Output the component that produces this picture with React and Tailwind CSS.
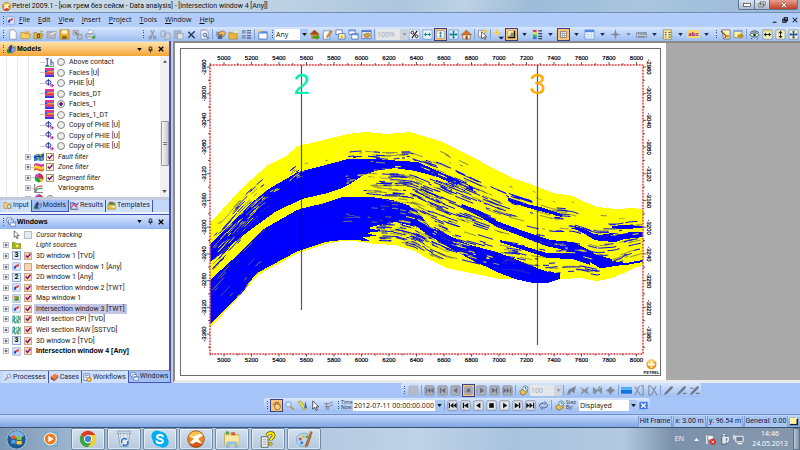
import React from 'react';

/* ---------- icon set (12 x 12 grid) ---------- */
const ART = {
  page: <path d="M3 1h4.5L10 3.5V11H3z" fill="#fff" stroke="#8793ad" strokeWidth=".8" />,
  open: <g><path d="M1 4h4l1-1.5h4V5H1z" fill="#e8a92a" /><path d="M1 10.5V4h3l1 1h4v1h3l-2.5 4.5z" fill="#f8cf5c" stroke="#b77c16" strokeWidth=".6" /></g>,
  openGear: <g><path d="M1 10.5V4h3l1 1h5l1 1-2 4.5z" fill="#f3bd3c" stroke="#9a6a18" strokeWidth=".7" /><circle cx="6" cy="7.5" r="2.2" fill="#5b4a1c" /><circle cx="6" cy="7.5" r=".9" fill="#f8cf5c" /><path d="M8 1.5l3 1-2 1.5z" fill="#d08a10" /></g>,
  archive: <g><path d="M1 3h9v7H1z" fill="#b9bcc2" stroke="#8a8d93" strokeWidth=".7" /><path d="M4 5l7-3v3l-7 3z" fill="#e5e6e9" stroke="#8d9096" strokeWidth=".6" /></g>,
  save: <g><path d="M1 1h10v10H1z" fill="#eeb02d" stroke="#a9751a" strokeWidth=".7" /><path d="M3 1.5h6V5H3z" fill="#fff8dd" /><path d="M3.5 7.5h5V11h-5z" fill="#8b6a24" /></g>,
  tools: <g><path d="M1 1.500h6v5H1z" fill="#c3c6cd" stroke="#8b8e96" strokeWidth=".7" /><path d="M3 3l7 7" stroke="#7b7e86" strokeWidth="1.800" /><path d="M6 6h5v5H6z" fill="#b5b8c0" stroke="#85888f" strokeWidth=".7" /></g>,
  print: <g><path d="M4 1l5 1-1 3H3z" fill="#fff" stroke="#8a94a5" strokeWidth=".6" /><path d="M1 5.5L9 5l2 1.5V9H1z" fill="#c2cad7" stroke="#697488" strokeWidth=".6" /><path d="M3 9h5v2H2z" fill="#f0f4fb" stroke="#7e889b" strokeWidth=".5" /><circle cx="9.6" cy="9.3" r="1.6" fill="#2fa83a" /></g>,
  cut: <g stroke="#8b93a6" fill="none" strokeWidth="1.2"><path d="M4 1l3.5 7M8 1L4.5 8" /><circle cx="3.6" cy="9.4" r="1.4" /><circle cx="8.4" cy="9.4" r="1.4" /></g>,
  copy: <g fill="#c6cfdf" stroke="#929db3" strokeWidth=".8"><path d="M1 2h5v6H1zM5 4.500h6V11H5z" /></g>,
  paste: <g stroke="#8f99ac" strokeWidth=".8"><path d="M1.500 2h7v8h-7z" fill="#aab4c6" /><path d="M5 5h6v6H5z" fill="#dde4ef" /></g>,
  del: <path d="M2.500 3l7 7M9.500 2.500l-7 7" stroke="#23355c" strokeWidth="1.500" />,
  preview: <g><path d="M2 1h6l2 2v8H2z" fill="#e9eef7" stroke="#7d8aa4" strokeWidth=".8" /><circle cx="6.500" cy="6.500" r="2" fill="#bcd1ea" stroke="#5d6c88" strokeWidth=".9" /><path d="M8 8l2.500 2.500" stroke="#5d6c88" strokeWidth="1.200" /></g>,
  hand: <g><path d="M1 3h6v5H1z" fill="#8b9cc1" /><path d="M4 4l5-2 2.500 2-2 4H5l3-2-4 .5z" fill="#f0be62" stroke="#7b5518" strokeWidth=".7" /><path d="M3 7h5v4H3z" fill="#54658e" /></g>,
  newFolder: <g><path d="M1 4h4l1 1h4v6H1z" fill="#eeb436" stroke="#a87718" strokeWidth=".6" /><path d="M8.500.5l.8 1.700 2 .8-2 .8-.8 1.700-.8-1.700-2-.8 2-.8z" fill="#fff17a" /></g>,
  columns: <g><path d="M1 1h4v4H1zM1 6.500h4v4H1z" fill="#8b98b6" /><path d="M6.500 1H11v1.400H6.500zM6.500 3.500H11v1.300H6.500zM6.500 6.500H11V8H6.500zM6.500 9H11v1.500H6.500z" fill="#5e6c8b" /></g>,
  newWin: <g><path d="M2 3h9v8H2z" fill="#fff" stroke="#3a63b0" strokeWidth=".8" /><path d="M2 3h9v2H2z" fill="#5d8be0" /><path d="M2.500 0l.8 1.800 2 .7-2 .8-.8 1.800-.8-1.800-2-.8 2-.7z" fill="#ffc43a" /></g>,
  homeGo: <g><path d="M1 6l5-5 5 5v5H2.500V6z" fill="#d9863c" /><path d="M.5 6L6 .8 11.500 6z" fill="#a34b1d" /><path d="M4 8h4V5.500L12 9l-4 3v-2H4z" fill="#35a728" /></g>,
  edit: <g><path d="M1.500 2h7v9h-7z" fill="#fff" stroke="#6d7ea6" strokeWidth=".8" /><path d="M4.500 8.500l5-7 1.800 1.200-5 6.800z" fill="#e9a03a" stroke="#74491a" strokeWidth=".5" /></g>,
  winA: <g><path d="M1 1h7v5H1z" fill="#fff" stroke="#4468ad" strokeWidth=".8" /><path d="M4 5h7v6H4z" fill="#fff6c0" stroke="#4468ad" strokeWidth=".8" /><path d="M5.500 9.500L7.500 6.500l2 3z" fill="#e8b800" /></g>,
  winB: <g fill="#fff" stroke="#4468ad" strokeWidth=".8"><path d="M1 1h7v5H1zM4 5h7v6H4z" /><path d="M1 2h7M4 6.200h7" stroke="#6a94ea" strokeWidth="1.400" /></g>,
  winHand: <g><path d="M1 1.500h10v9H1z" fill="#f4f1df" stroke="#4468ad" strokeWidth=".8" /><path d="M1 2.500h10" stroke="#4d7bd6" strokeWidth="1.800" /><path d="M3 6l5-1.500 2 1.500-1.500 3H4z" fill="#d9a13f" stroke="#6c4b17" strokeWidth=".6" /></g>,
  percent: <g><path d="M.5 1h11v10H.5z" fill="#f4f7fd" stroke="#8fa5cd" strokeWidth=".6" /><path d="M3 10l6-8" stroke="#111" strokeWidth="1.200" /><circle cx="3.700" cy="4" r="1.500" fill="none" stroke="#111" /><circle cx="8.300" cy="8" r="1.500" fill="none" stroke="#111" /></g>,
  horiz: <g><path d="M1 1h10v10H1z" fill="#eaf8fb" stroke="#6d93c6" strokeWidth=".8" /><path d="M2 6l2.500-2.500v2h3v-2L10 6 7.500 8.500v-2h-3v2z" fill="#1c8a95" /></g>,
  vert: <g><path d="M1 1h10v10H1z" fill="#fdfdf0" stroke="#6d7fb6" strokeWidth=".8" /><path d="M6 2l2.500 2.500h-2v3h2L6 10 3.500 7.500h2v-3h-2z" fill="#1c8a95" /></g>,
  move: <g><path d="M1 1h10v10H1z" fill="#dff3f9" stroke="#6d93c6" strokeWidth=".8" /><path d="M6 1.500l1.800 2H6.700v1.800h1.800V4.200l2 1.800-2 1.800V6.700H6.700v1.800h1.100L6 10.500l-1.800-2h1.100V6.700H3.500v1.100L1.500 6l2-1.800v1.100h1.800V3.500H4.200z" fill="#14808c" /></g>,
  moveY: <g><path d="M1 1h10v10H1z" fill="#fbf6c0" stroke="#7e86a0" strokeWidth=".8" /><path d="M6 1.500l1.800 2H6.700v1.800h1.800V4.200l2 1.800-2 1.800V6.700H6.700v1.800h1.100L6 10.500l-1.800-2h1.100V6.700H3.500v1.100L1.500 6l2-1.800v1.100h1.800V3.500H4.200z" fill="#1f4fae" /></g>,
  horizY: <g><path d="M1 1h10v10H1z" fill="#fbf6c0" stroke="#7e86a0" strokeWidth=".8" /><path d="M1 2h10" stroke="#d8c86a" strokeWidth="1.500" /><path d="M2 6l2.500-2.500v2h3v-2L10 6 7.500 8.500v-2h-3v2z" fill="#222" /></g>,
  vertY: <g><path d="M1 1h10v10H1z" fill="#fbf6c0" stroke="#7e86a0" strokeWidth=".8" /><path d="M6 2l2.500 2.500h-2v3h2L6 10 3.500 7.500h2v-3h-2z" fill="#222" /></g>,
  home: <g><path d="M2 6h8v5H2z" fill="#fff2d8" stroke="#9c5a24" strokeWidth=".7" /><path d="M0.500 6.500L6 1l5.500 5.500z" fill="#d97424" stroke="#8f4412" strokeWidth=".5" /><path d="M5 7.500h2.200V11H5z" fill="#7a3d12" /></g>,
  pick: <g><path d="M1.500 1.500h7v7h-7z" fill="#eef1d8" stroke="#7f8796" strokeWidth=".8" /><path d="M5 3v8l2-2 1.500 2.500 1-.6L8 8.500h2.500z" fill="#fff" stroke="#222" strokeWidth=".7" /><circle cx="9.500" cy="2.500" r="1.700" fill="#f2c43c" /></g>,
  bulb: <g><circle cx="4" cy="4" r="2.300" fill="#ffe34d" /><path d="M4 0v8M0 4h8" stroke="#f7c531" strokeWidth=".8" /><path d="M6 8.500h6l-3 3z" fill="#222" /></g>,
  shade: <g><path d="M1 1h10v10H1z" fill="#16160e" /><path d="M1 1h8v8H1z" fill="#f1ecb4" /><path d="M5 3.500h4V9H3V7h2z" fill="#8a864c" /></g>,
  legend: <g><path d="M1 1h4v2.500H1z" fill="#e33" /><path d="M1 3.500h4V6H1z" fill="#f3e21c" /><path d="M1 6h4v2.500H1z" fill="#2ac24a" /><path d="M1 8.500h4V11H1z" fill="#3273e8" /><path d="M7 2h4M7 5h4M7 8h4M7 10.500h4" stroke="#36425e" strokeWidth="1.200" /></g>,
  grid: <g><path d="M2 2h8v8H2z" fill="#f4f4f0" stroke="#666" strokeWidth=".9" /><path d="M2 4.700h8M2 7.300h8M4.700 2v8M7.300 2v8" stroke="#888" strokeWidth=".7" /></g>,
  gridB: <g><path d="M1 1h10v10H1z" fill="#f6faff" stroke="#6d93d6" strokeWidth=".8" /><path d="M1 1h10v2.500H1z" fill="#4b87e4" /><path d="M1 6h10M1 8.500h10M4.500 3v8M8 3v8" stroke="#a9c3ec" strokeWidth=".6" /></g>,
  cross: <path d="M6 0l1.200 4.800L12 6 7.200 7.200 6 12 4.800 7.200 0 6l4.800-1.200z" fill="#7f8798" />,
  ruler: <g><path d="M.5 4h11v5H.5z" fill="#d5dae6" stroke="#69758f" strokeWidth=".7" /><path d="M2.500 4v2.500M4.500 4v2.500M6.500 4v2.500M8.500 4v2.500M10 4v2.500M2 8h8" stroke="#414c66" strokeWidth=".7" /></g>,
  table: <g><path d="M1.500 1h9v10h-9z" fill="#fff6a8" stroke="#7e6e2a" strokeWidth=".7" /><path d="M3 3h2v1.500H3z" fill="#e33" /><path d="M3 5.500h2V7H3z" fill="#36c" /><path d="M3 8h2v1.500H3z" fill="#e80" /><path d="M7 3.700h2.500M7 6.200h2.500M7 8.700h2.500" stroke="#333" /></g>,
  hammer: <g><path d="M2 1h9v10H4z" fill="#fdf2b0" stroke="#55627f" strokeWidth=".8" /><path d="M1 2l6 6-2 2" fill="none" stroke="#7a4b1a" strokeWidth="1.300" /><circle cx="8.500" cy="8" r="1.600" fill="#e08a2a" /></g>,
  exportY: <g><path d="M1 1.500h9v8H1z" fill="#fbf0a6" stroke="#6f7c97" strokeWidth=".8" /><path d="M1 2.500h9" stroke="#8fa8d7" strokeWidth="1.500" /><path d="M5 6h3V4l4 3.500L8 11V9H5z" fill="#c58b1b" /></g>,
  eye: <g><path d="M1 6.500C3 3.500 9 3.500 11 6.500 9 9.500 3 9.500 1 6.500z" fill="#fff" stroke="#223" strokeWidth=".8" /><circle cx="6" cy="6.500" r="2" fill="#2b9e4a" /><circle cx="6" cy="6.500" r=".8" fill="#000" /><path d="M1.500 4C4 1.500 8 1.500 10.500 4" fill="none" stroke="#334" /><path d="M2 10l1.500 1M10 10l-1.500 1" stroke="#a33" /></g>,
  grabHand: <g><path d="M3 6L1.500 4.500 3 4l2 1.500L4 2h1.500L7 4.500V1.500h1.300l.7 3.300L10.500 4l.5 5-2 2.500H5z" fill="#f6d27a" stroke="#5b3d12" strokeWidth=".8" /></g>,
  lens: <g><circle cx="4.800" cy="4.800" r="3" fill="#d6eaff" stroke="#6f96cb" /><path d="M7 7l3.500 3.500" stroke="#c18a3a" strokeWidth="1.600" /></g>,
  measure: <g><path d="M1 2l3-1 6 8-2 2z" fill="#f0e040" stroke="#7d7420" strokeWidth=".6" /><path d="M9 1l2 8H8z" fill="#2f62c9" /></g>,
  cursor: <path d="M3 1v9l2-2 1.600 3.500 1.400-.7L6.500 7.500h3z" fill="#fff" stroke="#222" strokeWidth=".8" />,
  fishing: <g stroke="#7b8496" fill="none"><path d="M1 4h5l5-2M2 7h5l4-2M4 3v7" /><circle cx="5" cy="9" r="1.500" /></g>,
  blank: <rect x="1" y="1" width="10" height="10" rx="1" fill="#b6bdca" stroke="#a1a9b8" strokeWidth=".6" />,
  clockHand: <g><path d="M2 7l4-3 4 1v3l-4 3-3-1z" fill="#f0c04a" stroke="#6f5314" strokeWidth=".7" /><circle cx="8" cy="3.800" r="2.800" fill="#dff2ff" stroke="#2f7e98" strokeWidth=".8" /><path d="M8 2v2h1.500" stroke="#222" strokeWidth=".7" fill="none" /></g>,
  loop: <g fill="none" stroke="#5d6b86" strokeWidth="1.200"><path d="M1.500 7.500C1 4 4 3 8 3.500M10.500 4.500C11 8 8 9 4 8.500" /><path d="M7 1.500l2.500 2L7 5.500M5 6.500l-2.500 2 2.500 2" strokeWidth="1" /></g>,
  g1: <path d="M1 11l2-6 8-4-2 8-3-2-2 3z" fill="#7e8696" />,
  g2: <path d="M1 2l5 3 5-4-2 5 2 5-5-3-5 3 3-5z" fill="#8a91a0" />,
  g3: <g fill="#8a91a0"><path d="M1 2l5 4-5 4zM11 2L6 6l5 4z" /><path d="M3 10L9 1" stroke="#6c7484" /></g>,
  g4: <path d="M6 1l2 3 3 2-3 2-2 3-2-3-3-2 3-2z" fill="#828999" />,
  plane: <g><path d="M0 2.500h12v7H0z" fill="#1173dd" /><path d="M0 2.500h12v3H0z" fill="#58b4fb" /></g>,
  ax: <g stroke="#858da0" strokeWidth="1.200" fill="none"><path d="M1 11L6 1M1 2l6 9M7.500 1H10v10H7.500" /></g>,
  xa: <g stroke="#858da0" strokeWidth="1.200" fill="none"><path d="M4.500 1H2v10h2.500M5 2l6 9M10 1L5 11" /></g>,
  p1: <path d="M1 11l1-2.500L8 2l2-1 1 1-1 2-6 6z" fill="#727b8e" />,
  p2: <g fill="#727b8e"><path d="M1 11l1-2.500L8 2l2-1 1 1-1 2-6 6z" /><path d="M7.500 8.500h4v1.400h-4z" /></g>,
  p3: <g fill="#727b8e"><path d="M1 11l1-2.500L8 2l2-1 1 1-1 2-6 6z" /><path d="M1 3h4v1.200H1zM7.500 8.500h4v1.200h-4z" /></g>,
  closeB: <g><path d="M1.500 2h9v8h-9z" fill="#3f73df" /><path d="M3.500 3.500l5 5M8.500 3.500l-5 5" stroke="#fff" strokeWidth="1.300" /></g>,
  contact: <g><path d="M1 1h4M3 1v9M1 10h4M8 1v9M8 6c3-2 3 0 3 4" stroke="#2643a8" strokeWidth="1.300" fill="none" /><path d="M0 11.300h12" stroke="#36b24b" strokeWidth="1.200" /></g>,
  facies: <g><path d="M0 0h12v3H0z" fill="#f0309a" /><path d="M0 3h12v3H0z" fill="#2b3be0" /><path d="M3 3.500h9v2L3 7z" fill="#fb9a2c" /><path d="M0 6h12v3H0z" fill="#ee2c4c" /><path d="M0 9h12v3H0z" fill="#3a38e8" /></g>,
  phi: <g><ellipse cx="4.500" cy="4.500" rx="3.500" ry="2.600" fill="none" stroke="#24359a" strokeWidth="1.300" /><path d="M4.500 0v9" stroke="#24359a" strokeWidth="1.300" /><path d="M7 8h2M8 7v4M10 7v4M10 9h2" stroke="#b02aa8" strokeWidth="1.200" /></g>,
  fault: <g><path d="M0 4l5-2 3 1 4-2v9l-4 1-3-1-5 1z" fill="#2a7fe0" /><path d="M3 2l3 8M7 2l3 8" stroke="#e7b21d" strokeWidth="1.200" /><path d="M0 7l5-2 3 1 4-2" stroke="#1b2c78" fill="none" strokeWidth="1.200" /></g>,
  zone: <g><path d="M0 3c4-4 7 2 12-1v3c-5 3-8-3-12 0z" fill="#d6349c" /><path d="M0 5c4-3 7 3 12 0v3c-5 3-8-3-12 0z" fill="#f7d31b" /><path d="M0 8c4-3 7 3 12 0v2.500c-5 3-8-3-12 0z" fill="#e06a28" /></g>,
  segment: <g><circle cx="6" cy="6" r="5.300" fill="#26a33c" /><path d="M6 6V.7A5.300 5.300 0 0111 7.500z" fill="#d32b3a" /><path d="M6 6L1 4.500 2 2l4-1.300z" fill="#e23ac6" /><path d="M6 6l5 1.500L8 11z" fill="#e7c71e" /></g>,
  vario: <g fill="none"><path d="M1 0v11.500h11" stroke="#334" strokeWidth=".9" /><path d="M1.500 10c1-7 3-7 10-7.500" stroke="#e04848" strokeWidth="1.400" /><path d="M2 11c1-5 4-5 9.500-5.500" stroke="#28a55a" strokeWidth="1.800" /></g>,
  models: <g><path d="M1 7l3-2 2 1v5H3l-2-1z" fill="#2b8a3c" /><path d="M3 4l3-3 2 1-1 7-3 1z" fill="#233f98" /><path d="M6 6l5-3v5l-4 3z" fill="#8fa7da" stroke="#2b3f7a" strokeWidth=".6" /><path d="M7 2l2-1 1 2-2 1z" fill="#e9b62a" /></g>,
  input: <g><path d="M1 2h4l1 1.500h5V10H1z" fill="#f0cc6e" stroke="#a8822c" strokeWidth=".7" /><circle cx="8" cy="7.500" r="2.300" fill="#e6eefc" stroke="#637a9e" /></g>,
  results: <g><path d="M1 1v10h10" fill="none" stroke="#234" /><path d="M2 3l8 6M2 9l3-5 3 4 3-6" fill="none" stroke="#d33a52" strokeWidth="1.300" /><path d="M3 2l7 3" stroke="#2b52ce" strokeWidth="1.400" /></g>,
  templates: <g><path d="M1 5h10v6H1z" fill="#e9c23a" stroke="#94731a" strokeWidth=".6" /><path d="M2 2h9v3H2z" fill="#36a152" /><path d="M3 1h5v2H3z" fill="#d8452e" /><path d="M6 7h5v1.500H6z" fill="#fff" /></g>,
  windows: <g fill="#fff" stroke="#43659f" strokeWidth=".8"><path d="M1 1h6v5H1z" /><path d="M3 3.500h6v5H3z" /><path d="M5 6h6.500v5H5z" /><path d="M5 7h6.500" stroke="#6a94ea" strokeWidth="1.300" /></g>,
  processes: <g><path d="M2 10l5-5" stroke="#8c97ab" strokeWidth="2" /><circle cx="8" cy="4" r="2.600" fill="#dfe6f2" stroke="#7f8aa0" /></g>,
  cases: <g><path d="M1 5l5-4 5 2-5 5z" fill="#e8823e" /><path d="M1 5v3l5 3V8z" fill="#a8421c" /><path d="M6 8v3l5-5V3z" fill="#c95a26" /></g>,
  workflows: <g><path d="M1 1h8v9H1z" fill="#fff" stroke="#3e64b4" strokeWidth=".9" /><path d="M2.500 3h5M2.500 5.500h3" stroke="#2b52ce" /><circle cx="8" cy="8.500" r="3" fill="#eeb42c" stroke="#7e5b14" strokeWidth=".6" /><circle cx="8" cy="8.500" r="1" fill="#fff" /></g>,
  folderG: <g><path d="M0 2h4l1.500 1.500H12V10H0z" fill="#a4b42c" stroke="#6b7a16" strokeWidth=".8" /><circle cx="7" cy="6.500" r="1.800" fill="#f6f06a" /></g>,
  winX: <g><path d="M1 1h10v10H1z" fill="#e3ebfb" stroke="#7d9ad4" strokeWidth=".9" /><path d="M2.500 6l3-2v5h-3z" fill="#2b52ce" /><path d="M5.500 4L9 2.500v3L5.500 7z" fill="#d33a3a" /></g>,
  mapW: <g><path d="M1 1h10v10H1z" fill="#e3ebfb" stroke="#7d9ad4" strokeWidth=".9" /><path d="M3 3h6v6H3z" fill="#3b9a3e" /><path d="M3 3h3v4H3z" fill="#e98a1e" /></g>,
  well: <g fill="none" strokeWidth="2"><path d="M1 1v10M6.500 1v10M11 1v10" stroke="#3a6a9a" strokeWidth=".9" /><path d="M2 1l2 3-2 3 3 4" stroke="#20a090" /><path d="M8 1l2 4-3 3 2 3" stroke="#2fae4e" /></g>,
};

function Icon({ n, s = 'size-[10px]' }) {
  return <svg viewBox="0 0 12 12" className={`${s} shrink-0`} aria-hidden="true">{ART[n]}</svg>;
}

const Caret = ({ tone = '#1b2a4a' }) => (
  <svg viewBox="0 0 6 4" className="w-[5px] h-[3px] shrink-0"><path d="M0 0h6L3 4z" fill={tone} /></svg>
);

function Grip() {
  return (
    <span className="w-[6px] h-[10px] shrink-0 flex flex-col items-center justify-between py-[1px]">
      {[0, 1, 2, 3].map((i) => <i key={i} className="size-[1px] bg-[#33528f]" />)}
    </span>
  );
}
const Sep = () => <span className="w-[3px] h-[10px] shrink-0 flex justify-center"><i className="w-[1px] h-full bg-[#7f9fd8]" /></span>;

function Tool({ n, on }) {
  return (
    <button type="button" aria-label={n} className={`w-[13px] h-[13px] shrink-0 flex items-center justify-center ${on ? 'bg-[#fdc27a] border border-[#3b3f86]' : ''}`}>
      <Icon n={n} s={on ? 'size-[9px]' : 'size-[11px]'} />
    </button>
  );
}
const More = ({ dim }) => (
  <button type="button" aria-label="more" className="w-[13px] h-[13px] shrink-0 flex items-center justify-center"><Caret tone={dim ? '#7688ad' : '#1b2a4a'} /></button>
);

const VCR = {
  first: 'M2 3h1.200v6H2zM7 3v6L3.500 6zM10.500 3v6L7 6z',
  prev: 'M3 3h1.500v6H3zM9 3v6L4.500 6z',
  back: 'M8 3v6L3.500 6z',
  stop: 'M3.500 3.500h5v5h-5z',
  play: 'M4.500 3v6L9 6z',
  next: 'M3 3v6l4.500-3zM7.500 3H9v6H7.500z',
  last: 'M1.500 3v6L5 6zM5 3v6l3.500-3zM8.800 3H10v6H8.800z',
};
function Vcr({ k, dim, on }) {
  return (
    <button type="button" aria-label={k} className={`w-[13px] h-[13px] shrink-0 flex items-center justify-center ${on ? 'bg-[#fdc27a] border border-[#3b3f86]' : ''}`}>
      <svg viewBox="0 0 12 12" className={on ? 'size-[9px]' : 'size-[11px]'}>
        <rect x=".8" y=".8" width="10.400" height="10.400" rx="1.500" fill={dim ? '#a9afbc' : '#dfe3ea'} stroke={dim ? '#8b93a4' : '#7b8498'} strokeWidth=".8" />
        <path d={VCR[k]} fill={dim ? '#676d7a' : '#0c0f16'} />
      </svg>
    </button>
  );
}

function Combo({ label, value, w, dim }) {
  return (
    <span className={`${w} h-[11px] shrink-0 flex items-stretch ${dim ? 'bg-[#e4e6ea]' : 'bg-white'}`}>
      <select aria-label={label} defaultValue={value} disabled={dim} className={`appearance-none flex-1 min-w-0 bg-transparent pl-[1px] text-[7px] leading-[11px] opacity-100 ${dim ? 'text-[#a3a7af]' : 'text-[#111]'}`}>
        <option>{value}</option>
      </select>
      <span className={`w-[8px] shrink-0 flex items-center justify-center ${dim ? 'bg-[#cfd3db]' : 'bg-[#a9c6f5]'}`}><Caret tone={dim ? '#9aa0ab' : '#111'} /></span>
    </span>
  );
}

/* ---------- side panels ---------- */
function PanelHead({ icon, title, tone }) {
  return (
    <header className={`h-[14px] shrink-0 flex items-center pr-[3px] ${tone}`}>
      <Grip />
      <Icon n={icon} s="size-[10px]" />
      <h2 className="flex-1 pl-[1px] font-['Liberation_Sans',sans-serif] text-[7px] leading-[14px] font-bold text-black">{title}</h2>
      <button type="button" aria-label="menu" className="w-[11px] flex justify-center"><Caret tone="#000" /></button>
      <button type="button" aria-label="pin" className="w-[11px] flex justify-center">
        <svg viewBox="0 0 8 10" className="w-[5px] h-[7px]"><path d="M2 1h4v5H2zM.5 6h7M4 6v4" fill="none" stroke="#111" strokeWidth="1.200" /></svg>
      </button>
      <button type="button" aria-label="close" className="w-[10px] flex justify-center">
        <svg viewBox="0 0 8 8" className="size-[6px]"><path d="M1 1l6 6M7 1L1 7" stroke="#000" strokeWidth="1.800" /></svg>
      </button>
    </header>
  );
}

function Plus({ hide }) {
  return (
    <svg viewBox="0 0 6 6" className={`size-[6px] shrink-0 ${hide ? 'invisible' : ''}`}>
      <rect x=".5" y=".5" width="5" height="5" fill="#fff" stroke="#a3acba" strokeWidth=".8" /><path d="M1.500 3h3M3 1.500v3" stroke="#223" strokeWidth=".8" />
    </svg>
  );
}

function Tick({ id, on, tone }) {
  return (
    <span className="grid size-[8px] shrink-0">
      <input id={id} type="checkbox" defaultChecked={on} className={`peer appearance-none size-[8px] col-start-1 row-start-1 border ${tone}`} />
      <svg viewBox="0 0 8 8" className="invisible peer-checked:visible pointer-events-none size-[8px] col-start-1 row-start-1"><path d="M1.800 3.500l1.700 2 3-3.700" fill="none" stroke="#7a1478" strokeWidth="1.400" /></svg>
    </span>
  );
}

const PROPS = [
  ['contact', 'Above contact'], ['facies', 'Facies [U]'], ['phi', 'PHIE [U]'], ['facies', 'Facies_DT'], ['facies', 'Facies_1'],
  ['facies', 'Facies_1_DT'], ['phi', 'Copy of PHIE [U]'], ['phi', 'Copy of PHIE [U]'], ['phi', 'Copy of PHIE [U]'],
];
const FILTERS = [['fault', 'Fault filter'], ['zone', 'Zone filter'], ['segment', 'Segment filter']];

function ModelTree() {
  return (
    <div className="flex-1 min-h-0 flex bg-white overflow-hidden">
      <div className="flex-1 min-w-0 overflow-hidden pt-[1px]">
        <div className="h-[147px] grid grid-rows-[repeat(14,minmax(0,1fr))] text-[7px] leading-[10px] text-[#222]">
          {PROPS.map(([ic, t], i) => (
            <div key={i} className="flex items-center">
              <i className="w-[11px] ml-[6px] h-full border-l border-[#ececec]" />
              <i className="w-[11px] h-full border-l border-[#ececec]" />
              <i className="w-[12px] h-full border-l border-[#e4e4e4]" />
              <i className="w-[5px] h-[1px] bg-[#c9c9c9]" />
              <Icon n={ic} s="size-[9px]" />
              <input id={`prop-${i}`} type="radio" name="prop" defaultChecked={i === 4} className="appearance-none size-[8px] ml-[3px] shrink-0 rounded-full border border-[#858585] bg-[#eeeeea] checked:bg-[radial-gradient(circle,#6d1270_35%,#f3eef3_45%)]" />
              <label htmlFor={`prop-${i}`} className="pl-[4px] whitespace-nowrap">{t}</label>
            </div>
          ))}
          {FILTERS.map(([ic, t], i) => (
            <div key={t} className="flex items-center">
              <i className="w-[11px] ml-[6px] h-full border-l border-[#ececec]" />
              <i className="w-[8px] h-full border-l border-[#ececec]" />
              <Plus />
              <i className="w-[3px] h-[1px] bg-[#c9c9c9]" />
              <Icon n={ic} s="size-[10px]" />
              <span className="w-[2px]" />
              <Tick id={`flt-${i}`} on tone="bg-[#fff5d6] border-[#a39a76]" />
              <label htmlFor={`flt-${i}`} className="pl-[4px] italic whitespace-nowrap">{t}</label>
            </div>
          ))}
          <div className="flex items-center">
            <i className="w-[11px] ml-[6px] h-full border-l border-[#ececec]" />
            <i className="w-[8px] h-full border-l border-[#ececec]" />
            <Plus />
            <i className="w-[3px] h-[1px] bg-[#c9c9c9]" />
            <Icon n="vario" s="size-[9px]" />
            <span className="pl-[15px] whitespace-nowrap">Variograms</span>
          </div>
          <div className="flex items-center">
            <i className="w-[11px] ml-[6px] h-full border-l border-[#ececec]" />
            <i className="w-[8px] h-full border-l border-[#ececec]" />
            <Plus />
            <i className="w-[3px] h-[1px] bg-[#c9c9c9]" />
            <Icon n="segment" s="size-[10px]" />
            <i className="size-[8px] ml-[2px] rounded-full border border-[#858585] bg-[#eeeeea]" />
          </div>
        </div>
      </div>
      <div className="w-[9px] shrink-0 bg-[#f0f0f0] flex flex-col items-center py-[4px]">
        <svg viewBox="0 0 6 4" className="w-[4px] h-[3px]"><path d="M0 4h6L3 0z" fill="#555" /></svg>
        <span className="flex-[60_0_0px]" />
        <span className="w-[8px] flex-[44_0_0px] border border-[#9a9a9a] rounded-[1px] bg-gradient-to-r from-[#f6f6f6] to-[#c9c9cb] flex flex-col items-center justify-center gap-[1px]">
          <i className="w-[4px] h-[1px] bg-[#777]" /><i className="w-[4px] h-[1px] bg-[#777]" />
        </span>
        <span className="flex-[24_0_0px]" />
        <Caret tone="#555" />
      </div>
    </div>
  );
}

const WINS = [
  ['3', '3D window 1 [TVD]', 1], ['winX', 'Intersection window 1 [Any]', 0], ['2', '2D window 1 [Any]', 1], ['winX', 'Intersection window 2 [TWT]', 1],
  ['mapW', 'Map window 1', 1], ['winX', 'Intersection window 3 [TWT]', 1], ['well', 'Well section CPI [TVD]', 1], ['well', 'Well section RAW [SSTVD]', 1],
  ['3', '3D window 2 [TVD]', 1], ['winX', 'Intersection window 4 [Any]', 1],
];

function WindowTree() {
  return (
    <div className="flex-1 min-h-0 bg-white pt-[1px] overflow-hidden">
      <div className="h-[127px] grid grid-rows-[repeat(12,minmax(0,1fr))] text-[7px] leading-[10px] text-[#222]">
        <div className="flex items-center pl-[3px]">
          <Plus hide />
          <span className="w-[3px]" />
          <Icon n="cursor" s="size-[9px]" />
          <span className="w-[3px]" />
          <Tick id="w-cur" tone="bg-[#e6ebf0] border-[#b4bcc6]" />
          <label htmlFor="w-cur" className="pl-[4px] italic">Cursor tracking</label>
        </div>
        <div className="flex items-center pl-[3px]">
          <Plus />
          <span className="w-[3px]" />
          <Icon n="folderG" s="size-[9px]" />
          <span className="pl-[15px] italic">Light sources</span>
        </div>
        {WINS.map(([ic, t, on], i) => (
          <div key={i} className="flex items-center pl-[3px]">
            <Plus />
            <span className="w-[3px]" />
            {ic.length === 1
              ? <span className="size-[9px] shrink-0 border border-[#8fa9dd] bg-[#e6eefc] text-[7px] leading-[7px] font-bold text-center text-black">{ic}</span>
              : <Icon n={ic} s="size-[9px]" />}
            <span className="w-[3px]" />
            <Tick id={`w-${i}`} on={!!on} tone="bg-[#fbd3b0] border-[#c9a68c]" />
            <label htmlFor={`w-${i}`} className={`ml-[2px] px-[2px] whitespace-nowrap ${i === 5 ? 'bg-[#c5c5e6]' : ''} ${i === 9 ? "font-['Liberation_Sans',sans-serif] font-bold text-black" : ''}`}>{t}</label>
          </div>
        ))}
      </div>
    </div>
  );
}

function Tabs({ items, active }) {
  return (
    <nav className="h-[12px] shrink-0 flex items-stretch bg-[#c3d8fb] pl-[2px] text-[7px] leading-[11px] text-[#1c2540]">
      {items.map(([ic, t]) => (
        <button key={t} type="button" className={`flex items-center gap-[1px] pl-[1px] pr-[2px] border-r border-[#3f56b4] ${t === active ? 'bg-[#a3c0f3] border-b' : 'bg-[#cfe0fc]'}`}>
          <Icon n={ic} s="size-[9px]" />
          <span>{t}</span>
        </button>
      ))}
    </nav>
  );
}

/* ---------- intersection plot ---------- */
const TOP = [[210, 222], [222, 210], [242, 188], [268, 165], [285, 157], [298, 146], [315, 142], [348, 134], [365, 132], [388, 134], [410, 132], [430, 138], [443, 142], [470, 156], [493, 168], [513, 178], [533, 185], [553, 193], [573, 196], [585, 202], [597, 207], [617, 209], [633, 208], [643, 209]];
const BASE = [[210, 328], [238, 298], [258, 275], [298, 253], [325, 244], [342, 241], [355, 241], [375, 244], [395, 245], [415, 251], [430, 260], [447, 268], [470, 273], [500, 279], [517, 279], [533, 282], [547, 282], [563, 279], [580, 278], [597, 281], [613, 278], [630, 270], [643, 265]];
const BODIES = [
  [[210, 244], [226, 229], [242, 212], [255, 200], [267, 190], [298, 172], [318, 167], [348, 159], [375, 159], [402, 161], [418, 162], [435, 170], [452, 177], [473, 187], [473, 191], [452, 183], [435, 176], [415, 171], [395, 168], [375, 171], [362, 176], [350, 184], [342, 188], [328, 193], [302, 199], [275, 212], [253, 228], [236, 241], [222, 253], [210, 262]],
  [[210, 280], [232, 260], [262, 230], [297, 210], [308, 207], [325, 203], [342, 197], [372, 197], [392, 200], [408, 205], [420, 214], [430, 227], [430, 236], [418, 228], [408, 225], [396, 222], [384, 224], [374, 226], [368, 228], [382, 231], [366, 233], [378, 236], [362, 237], [370, 241], [352, 240], [342, 240], [325, 242], [298, 251], [257, 273], [236, 298], [210, 324]],
  [[430, 227], [450, 236], [470, 245], [497, 252], [520, 261], [537, 268], [548, 272], [560, 273], [560, 279], [547, 283], [533, 283], [515, 279], [497, 272], [470, 259], [450, 248], [430, 236]],
  [[462, 204], [480, 211], [497, 221], [523, 231], [550, 240], [573, 242], [585, 248], [597, 255], [612, 259], [612, 267], [600, 268], [590, 262], [578, 256], [560, 249], [546, 246], [523, 237], [497, 227], [480, 217], [462, 208]],
  [[500, 240], [523, 246], [547, 253], [573, 253], [590, 261], [590, 265], [573, 259], [547, 258], [523, 250], [500, 242]],
  [[508, 199], [525, 204], [540, 207], [562, 214], [562, 217], [540, 211], [525, 207], [508, 201]],
  [[590, 233], [600, 235], [612, 233], [643, 232], [643, 237], [625, 239], [615, 242], [600, 241], [592, 239]],
  [[575, 226], [583, 229], [592, 233], [592, 238], [583, 233], [575, 229]],
  [[612, 226], [624, 225], [643, 226], [643, 228], [622, 229], [612, 228]],
  [[600, 261], [612, 261], [626, 263], [643, 260], [643, 262], [626, 265], [612, 266], [600, 266]],
];

function at(curve, x) {
  for (let i = 1; i < curve.length; i++) {
    if (x <= curve[i][0]) {
      const [x0, y0] = curve[i - 1];
      const [x1, y1] = curve[i];
      return y0 + ((y1 - y0) * (x - x0)) / (x1 - x0);
    }
  }
  return curve[curve.length - 1][1];
}

/* [x from, x to, depth fraction from, to, count, longest, colour] */
const ZONES = [
  [210, 262, 0.08, 0.22, 26, 12, 'b'], [212, 262, 0.22, 0.42, 36, 14, 'y'], [262, 300, 0.24, 0.3, 8, 8, 'y'], [210, 262, 0.36, 0.48, 36, 14, 'b'], [210, 260, 0.6, 0.9, 12, 10, 'g'],
  [210, 240, 0.93, 0.99, 10, 14, 'b'], [345, 430, 0.16, 0.23, 34, 12, 'b'], [290, 340, 0.17, 0.23, 7, 6, 'b'],
  [362, 440, 0.36, 0.56, 110, 15, 'b'], [370, 440, 0.26, 0.34, 12, 8, 'y'], [340, 400, 0.38, 0.5, 22, 10, 'y'], [370, 430, 0.58, 0.7, 16, 10, 'g'],
  [392, 428, 0.62, 0.82, 22, 9, 'y'], [330, 400, 0.72, 0.84, 14, 9, 'g'], [376, 432, 0.8, 0.97, 76, 14, 'b'], [410, 450, 0.58, 0.78, 40, 14, 'b'], [410, 460, 0.64, 0.85, 16, 12, 'y'],
  [422, 510, 0.18, 0.4, 84, 20, 'b'], [435, 475, 0.26, 0.36, 14, 8, 'y'], [425, 500, 0.44, 0.58, 46, 18, 'b'], [430, 520, 0.62, 0.76, 20, 16, 'b'],
  [430, 520, 0.78, 0.92, 44, 16, 'b'], [440, 500, 0.78, 0.88, 14, 9, 'y'], [505, 562, 0.16, 0.3, 26, 22, 'b'], [500, 600, 0.36, 0.46, 8, 14, 'b'],
  [490, 600, 0.5, 0.7, 36, 18, 'b'], [550, 600, 0.58, 0.72, 10, 9, 'y'], [568, 600, 0.3, 0.44, 16, 14, 'b'], [598, 640, 0.22, 0.34, 10, 14, 'b'],
  [598, 640, 0.5, 0.62, 10, 12, 'b'], [600, 635, 0.68, 0.82, 14, 12, 'b'], [596, 640, 0.34, 0.44, 6, 8, 'y'], [545, 600, 0.82, 0.94, 20, 18, 'b'], [440, 640, 0.06, 0.16, 12, 10, 'g'], [505, 550, 0.68, 0.84, 12, 18, 'b'],
];
const INK = { b: '#0000ff', y: '#ffff00', g: '#7d7d5c' };

function makeStreaks() {
  let seed = 20090701;
  const rnd = () => {
    seed = (seed * 1664525 + 1013904223) % 4294967296;
    return seed / 4294967296;
  };
  const out = [];
  ZONES.forEach(([xa, xb, fa, fb, n, len, ink]) => {
    for (let i = 0; i < n; i++) {
      const x0 = xa + rnd() * (xb - xa);
      const f = fa + rnd() * (fb - fa);
      const x1 = Math.min(643, x0 + 3 + rnd() * len);
      const pts = [];
      for (let x = x0; x <= x1; x += 3) pts.push(`${x.toFixed(1)},${(at(TOP, x) + f * (at(BASE, x) - at(TOP, x))).toFixed(1)}`);
      const thin = rnd() < 0.4;
      out.push({ d: pts.join(' '), c: ink === 'b' && thin ? '#44448a' : INK[ink], w: thin ? 0.6 : 1 });
    }
  });
  return out;
}
const STREAKS = makeStreaks();
const poly = (p) => p.map((q) => q.join(',')).join(' ');
const XT = Array.from({ length: 16 }, (_, i) => [5000 + i * 200, 224 + i * 27.5]);
const YT = Array.from({ length: 11 }, (_, i) => [-2960 - i * 40, 67 + i * 26.7]);

function Plot() {
  return (
    <svg viewBox="175 43 491 337" className="w-full h-full block" fontFamily="'Liberation Sans', Arial, sans-serif" role="img" aria-label="Facies intersection">
      <rect x="180.500" y="48.500" width="480" height="327" fill="#fff" stroke="#6b6b6b" />
      <g shapeRendering="crispEdges">
        <polygon points={poly([...TOP, ...BASE.slice().reverse()])} fill="#ff0" />
        {BODIES.map((b, i) => <polygon key={i} points={poly(b)} fill="#00f" />)}
      </g>
      {STREAKS.map((s, i) => <polyline key={i} points={s.d} fill="none" stroke={s.c} strokeWidth={s.w} />)}
      <rect x="210" y="65" width="433" height="289" fill="none" stroke="#f5a3a3" />
      <rect x="210" y="65" width="433" height="289" fill="none" stroke="#d8000c" strokeDasharray="1.500 1.500" />
      {XT.map(([t, x]) => (
        <g key={t}>
          <path d={`M${x} 62v3M${x - 13.75} 63v2M${x} 354v2.500M${x - 13.75} 354v1.500`} stroke="#333" strokeWidth=".8" />
          <text x={x} y="60" fontSize="6" textAnchor="middle" fill="#000010" stroke="#000010" strokeWidth=".2">{t}</text>
          <text x={x} y="362" fontSize="6" textAnchor="middle" fill="#000010" stroke="#000010" strokeWidth=".2">{t}</text>
        </g>
      ))}
      {YT.map(([t, y]) => (
        <g key={t}>
          <path d={`M207 ${y}h3M208 ${y + 13.3}h2M643 ${y}h3M643 ${y + 13.3}h2`} stroke="#333" strokeWidth=".8" />
          <text transform={`translate(206 ${y}) rotate(-90)`} fontSize="6" textAnchor="middle" fill="#000010" stroke="#000010" strokeWidth=".2">{t}</text>
          <text transform={`translate(647 ${y}) rotate(90)`} fontSize="6" textAnchor="middle" fill="#000010" stroke="#000010" strokeWidth=".2">{t}</text>
        </g>
      ))}
      <path d="M301.500 65V310M537.500 65V345" stroke="#000" strokeOpacity=".65" strokeWidth="1.200" />
      <text x="301.500" y="94" fontSize="30" textAnchor="middle" fill="#00f0b0">2</text>
      <text x="537.500" y="94" fontSize="30" textAnchor="middle" fill="#ffae00">3</text>
      <circle cx="651.500" cy="364.500" r="5" fill="#f0921e" />
      <circle cx="651" cy="363" r="3.500" fill="#ffd061" />
      <path d="M651.500 361v7M648 364.500h7" stroke="#fff" strokeWidth="1.500" />
      <text x="651.500" y="373.500" fontSize="4" fontWeight="bold" textAnchor="middle" fill="#111">PETREL</text>
    </svg>
  );
}

/* ---------- task bar pictures (24 x 24 grid) ---------- */
const APPS = {
  chrome: <g><circle cx="12" cy="12" r="11" fill="#f3cf2c" /><path d="M12 12L2.500 6.500A11 11 0 0121.500 6.500z" fill="#d93a2b" /><path d="M12 12L2.500 6.500A11 11 0 0012 23l5-8.500z" fill="#3aa346" /><path d="M12 6.500h9.500a11 11 0 01.5 9L16.500 12z" fill="#f7cf2e" /><circle cx="12" cy="12" r="5.500" fill="#fff" /><circle cx="12" cy="12" r="4.200" fill="#4285d8" /></g>,
  bin: <g><path d="M4 3h16l-3 19H7z" fill="#e3ebf3" stroke="#7f93a8" /><path d="M7 5l2 16M11 5l.5 7M17 5l-1 8" stroke="#a9b9c9" /><path d="M3 1.500h18v3.500H3z" fill="#c6d3e0" stroke="#7f93a8" strokeWidth=".8" /><path d="M9.500 17a3.500 3.500 0 016-4M16.500 15a3.500 3.500 0 01-6 4" fill="none" stroke="#2c6ec9" strokeWidth="2" /></g>,
  skype: <g><circle cx="8" cy="8" r="7.500" fill="#00aff0" /><circle cx="16" cy="16" r="7.500" fill="#00aff0" /><circle cx="12" cy="12" r="10" fill="#00aff0" /><path d="M16 8.500c-1-2.500-8-2.500-8 .5 0 3.500 8 2 8 6 0 3.500-8 3-8.500 0" fill="none" stroke="#fff" strokeWidth="2.600" strokeLinecap="round" /></g>,
  petrel: <g><circle cx="12" cy="12" r="11" fill="#f08a1e" /><path d="M1.500 9A11 11 0 0122 8L12 12z" fill="#ffc04a" /><path d="M3 19a11 11 0 0018 0L12 13z" fill="#d9541a" /><path d="M3 7l6 1.500 8-3.500 5 1-7 5.500 5 7-7.500-3L7 18.500 4 17l5-5.500z" fill="#fff" /><circle cx="12" cy="12" r="11" fill="none" stroke="#8a4212" strokeWidth="1" /></g>,
  explorer: <g><path d="M2 4h8l2 2h9v15H2z" fill="#f1d77c" stroke="#b89a45" strokeWidth=".8" /><path d="M4 2h4v4H4z" fill="#4ba154" /><path d="M11 3h5v4h-5z" fill="#d8563d" /><path d="M3 8h18v13H3z" fill="#f9e8a4" /><path d="M5 23v-5c0-1.500 1-2 2-2h10c1 0 2 .5 2 2v5h-3v-4H8v4z" fill="#9ccbe9" stroke="#5d9bc2" strokeWidth=".7" /></g>,
  help: <g><path d="M3 9h9v14H3z" fill="#f2f2f2" stroke="#444" /><path d="M5 13h5M5 16h5M5 19h5" stroke="#888" /><path d="M11 7.500c1-4.500 8.500-4.500 8.500 0 0 3-4 3.200-4 6.500" fill="none" stroke="#4a4400" strokeWidth="4.600" /><path d="M11 7.500c1-4.500 8.500-4.500 8.500 0 0 3-4 3.200-4 6.500" fill="none" stroke="#ffee00" strokeWidth="3" /><circle cx="15.500" cy="18.500" r="2" fill="#ffee00" stroke="#4a4400" strokeWidth=".8" /></g>,
  paint: <g><path d="M2 13C2 6 10 3 16 5c7 2 6 7 2 8-3 1-2 3-3 6-2 5-13 2-13-6z" fill="#b7d9ee" stroke="#6f9cbd" /><circle cx="7" cy="12" r="2" fill="#d84b3b" /><circle cx="11" cy="8.500" r="2" fill="#f0b429" /><circle cx="16" cy="9" r="1.800" fill="#4aa35a" /><circle cx="9" cy="17" r="2" fill="#3b78d8" /><path d="M14 20L21 2l2 1-6 18-3 2z" fill="#c3712c" stroke="#7c4517" strokeWidth=".6" /></g>,
};

function AppButton({ n }) {
  return (
    <button type="button" aria-label={n} className="w-[34px] h-[22px] flex items-center justify-center rounded-[2px] border border-[#6f89a8] bg-gradient-to-b from-[#d3e0ee] to-[#b5c9de] shadow-[inset_0_0_0_1px_rgba(255,255,255,0.55)]">
      <svg viewBox="0 0 24 24" className="size-[18px]">{APPS[n]}</svg>
    </button>
  );
}

const MENUS = ['File', 'Edit', 'View', 'Insert', 'Project', 'Tools', 'Window', 'Help'];
const BAR = 'bg-gradient-to-b from-[#d6e6fd] to-[#9dbdf0]';

export default function App() {
  return (
    <div className="h-screen min-h-[450px] flex flex-col overflow-hidden bg-[#a6c4f7] font-['Roboto',sans-serif]">
      <header className="h-[13px] shrink-0 flex items-start bg-[linear-gradient(115deg,#c9d9e8_0%,#c3d5e6_30%,#adc6de_50%,#bdd1e5_58%,#9ebcd9_66%,#a9c5df_80%,#98b8d6_100%)] border-b border-[#6f8fb8]">
        <span className="w-[12px] h-[12px] shrink-0 flex items-center justify-center"><svg viewBox="0 0 24 24" className="size-[9px]">{APPS.petrel}</svg></span>
        <h1 className="flex-1 text-[7px] leading-[12px] text-[#111] whitespace-nowrap">Petrel 2009.1 - [юж грем без сейсм - Data analysis] - [Intersection window 4 [Any]]</h1>
        <div className="flex h-[10px] mr-[2px] border border-t-0 border-[#5f7590] rounded-b-[2px] overflow-hidden">
          <button type="button" aria-label="minimize" className="w-[16px] flex items-center justify-center bg-gradient-to-b from-[#dbe5f0] to-[#a8bdd4] border-r border-[#5f7590]">
            <svg viewBox="0 0 8 4" className="w-[8px] h-[4px]"><rect x=".5" y=".5" width="7" height="3" fill="#fff" stroke="#555" strokeWidth=".8" /></svg>
          </button>
          <button type="button" aria-label="restore" className="w-[15px] flex items-center justify-center bg-gradient-to-b from-[#dbe5f0] to-[#a8bdd4] border-r border-[#5f7590]">
            <svg viewBox="0 0 10 8" className="w-[8px] h-[7px]"><path d="M3 .8h6v4H3zM1 3h6v4H1z" fill="#fff" stroke="#444" strokeWidth=".9" /></svg>
          </button>
          <button type="button" aria-label="close window" className="w-[27px] flex items-center justify-center bg-gradient-to-b from-[#e6a08e] to-[#c03a20]">
            <svg viewBox="0 0 8 8" className="size-[6px]"><path d="M1 1l6 6M7 1L1 7" stroke="#5a1d12" strokeWidth="2.600" /><path d="M1 1l6 6M7 1L1 7" stroke="#fff" strokeWidth="1.600" /></svg>
          </button>
        </div>
      </header>

      <div className="h-[14px] shrink-0 flex items-center bg-[#b2cdfa] font-['Open_Sans',sans-serif] text-[7px] leading-[14px] text-[#111]">
        <Grip />
        <Icon n="winX" s="size-[9px]" />
        <nav className="flex gap-[8px] pl-[4px] flex-1">
          {MENUS.map((m) => <button key={m} type="button"><span className="underline">{m[0]}</span>{m.slice(1)}</button>)}
        </nav>
        <div className="flex gap-[4px] pr-[2px]">
          {['M1 7h5', 'M3 1h4.500v4H3zM1 3h4.500v4H1z', 'M1 1l6 6M7 1L1 7'].map((d) => (
            <button key={d} type="button" aria-label="document window"><svg viewBox="0 0 8 8" className="size-[6px]"><path d={d} fill="none" stroke="#111" strokeWidth="1.400" /></svg></button>
          ))}
        </div>
      </div>

      <div className={`h-[14px] shrink-0 flex items-center ${BAR} font-['Open_Sans',sans-serif]`}>
        <Grip />
        {['page', 'open', 'openGear', 'archive', 'save', 'tools', 'print'].map((n) => <Tool key={n} n={n} />)}
        <span className="w-[43px]" />
        <Grip />
        {['cut', 'copy', 'paste', 'del', 'preview'].map((n) => <Tool key={n} n={n} />)}
        <Sep />
        {['hand', 'newFolder', 'columns'].map((n) => <Tool key={n} n={n} />)}
        <Sep />
        <Tool n="newWin" />
        <Grip />
        <Combo label="Domain" value="Any" w="w-[33px]" />
        {['homeGo', 'edit', 'winA', 'winB', 'winHand'].map((n) => <Tool key={n} n={n} />)}
        <Sep />
        <Combo label="Zoom" value="100%" w="w-[32px]" dim />
        {['percent', 'horiz'].map((n) => <Tool key={n} n={n} />)}
        <Tool n="vert" on />
        {['move', 'home'].map((n) => <Tool key={n} n={n} />)}
        <Sep />
        <Tool n="pick" />
        <Sep />
        <Tool n="bulb" />
        <Tool n="shade" on /><More />
        <Tool n="legend" /><More />
        <Tool n="grid" on /><More />
        <Tool n="gridB" /><More />
        <Tool n="cross" /><More dim />
        <Tool n="ruler" /><More />
        <Tool n="table" /><More />
        <button type="button" className="w-[13px] h-[8px] shrink-0 bg-[#f6d773] text-[6px] leading-[7px] font-bold text-[#8c1a7c] text-center">abc</button><More />
        <span className="flex-1" />
        <Grip />
        {['hammer', 'exportY'].map((n) => <Tool key={n} n={n} />)}
        <Sep />
        {['eye', 'horizY', 'vertY', 'moveY'].map((n) => <Tool key={n} n={n} />)}
      </div>

      <div className="flex-1 min-h-0 flex">
        <aside className="w-[171px] shrink-0 flex flex-col border-r-2 border-[#3f51b5] bg-[#c8d8f8]">
          <section className="flex-[158_0_0px] min-h-0 flex flex-col pt-[1px]">
            <PanelHead icon="models" title="Models" tone="bg-gradient-to-b from-[#fde3a6] to-[#f2a531]" />
            <ModelTree />
            <i className="h-[3px] shrink-0 bg-[#c4cbdc]" />
            <Tabs active="Models" items={[['input', 'Input'], ['models', 'Models'], ['results', 'Results'], ['templates', 'Templates']]} />
          </section>
          <i className="h-[3px] shrink-0 bg-[#eef3fe] border-b border-[#3f51b5]" />
          <section className="flex-[157_0_0px] min-h-0 flex flex-col">
            <PanelHead icon="windows" title="Windows" tone="bg-gradient-to-b from-[#d9e7fe] to-[#92b4ee]" />
            <WindowTree />
            <i className="h-[1px] shrink-0 bg-[#8d99b8]" />
            <Tabs active="Windows" items={[['processes', 'Processes'], ['cases', 'Cases'], ['workflows', 'Workflows'], ['windows', 'Windows']]} />
          </section>
        </aside>
        <i className="w-[2px] bg-[#c9cbd6]" />
        <main className="flex-1 min-w-0 flex flex-col border-l-2 border-t-2 border-[#8b8b8b] bg-[#a9a9a9] border-b-[#e9ebee] border-b-[3px]">
          <div className="w-[491px] flex-1 min-h-0 bg-white"><Plot /></div>
        </main>
      </div>

      <div className="h-[31px] shrink-0 flex flex-col justify-between pb-[2px] bg-[#a6c4f7] font-['Open_Sans',sans-serif]">
        <div className={`self-start ml-[401px] h-[14px] flex items-center rounded-[2px] ${BAR}`}>
          <Grip />
          <Tool n="blank" />
          <Sep />
          {['first', 'prev', 'back'].map((k) => <Vcr key={k} k={k} dim />)}
          <Vcr k="stop" dim on />
          {['play', 'next', 'last'].map((k) => <Vcr key={k} k={k} dim />)}
          <Sep />
          <Tool n="clockHand" />
          <Combo label="Speed" value="100" w="w-[32px]" dim />
          <Sep />
          {['g1', 'g2', 'g3', 'g4'].map((n) => <Tool key={n} n={n} />)}
          <Sep />
          {['plane', 'ax', 'xa'].map((n) => <Tool key={n} n={n} />)}
          <Sep />
          {['p1', 'p2', 'p3'].map((n) => <Tool key={n} n={n} />)}
        </div>
        <div className={`self-start ml-[264px] h-[14px] flex items-center rounded-[2px] ${BAR}`}>
          <Grip />
          <Tool n="grabHand" on />
          {['lens', 'measure', 'cursor', 'fishing'].map((n) => <Tool key={n} n={n} />)}
          <Grip />
          <span className="w-[12px] text-[5px] leading-[5px] text-[#333]">Time<br />Now</span>
          <Combo label="Time" value="2012-07-11 00:00:00.000" w="w-[90px]" />
          <Sep />
          {Object.keys(VCR).map((k) => <Vcr key={k} k={k} />)}
          <Tool n="loop" />
          <Sep />
          <Tool n="clockHand" />
          <span className="w-[13px] text-[5px] leading-[5px] text-[#333]">Step<br />By:</span>
          <Combo label="Step by" value="Displayed" w="w-[58px]" />
          <Tool n="closeB" />
        </div>
      </div>

      <footer className="h-[13px] shrink-0 flex items-center justify-end gap-[1px] pr-[1px] border-t border-[#6d8fcd] bg-gradient-to-b from-[#c4d9fb] to-[#7fa5e2] text-[7px] leading-[10px] text-[#16203c]">
        {[['Hit Frame', 'w-[34px]'], ['x: 3.00 m', 'w-[33px]'], ['y: 96.54 m', 'w-[36px]'], ['General: 0.00', 'w-[44px]']].map(([t, w]) => (
          <span key={t} className={`${w} h-[11px] text-center whitespace-nowrap border-x border-[#7f9fd8] bg-[#a9c5f1]`}>{t}</span>
        ))}
        <svg viewBox="0 0 12 12" className="size-[10px]"><path d="M1 2h10v9H1z" fill="#222" /><path d="M1 2h8v7.500H1z" fill="#fdf6a8" /><path d="M8 1l3 2-3 1z" fill="#fff" /></svg>
      </footer>

      <div className="h-[23px] shrink-0 flex items-center border-t border-[#3c5473] bg-[linear-gradient(90deg,#7c97b5_0%,#9db5cf_9%,#b9cde2_26%,#b3c9e0_38%,#bfd2e6_52%,#a9c3de_64%,#b2c9e0_78%,#7c92ab_84%,#8597ab_100%)] font-['Open_Sans',sans-serif] text-white">
        <button type="button" aria-label="Start" className="ml-[5px] w-[22px] flex justify-center">
          <svg viewBox="0 0 24 24" className="size-[21px]">
            <circle cx="12" cy="12" r="11" fill="#1d5a94" stroke="#b7d3ea" strokeWidth=".8" />
            <path d="M3 8a10 10 0 0118 0c-5 3-13 3-18 0z" fill="#7fb2dc" />
            <path d="M6 8c2-1 3-1 5 0v4c-2-1-3-1-5 0z" fill="#ee5a2c" /><path d="M12 8c2 1 4 1 6 0v4c-2 1-4 1-6 0z" fill="#8cc63f" />
            <path d="M6 13c2-1 3-1 5 0v4c-2-1-3-1-5 0z" fill="#4aa3e8" /><path d="M12 13c2 1 4 1 6 0v4c-2 1-4 1-6 0z" fill="#fdc82e" />
          </svg>
        </button>
        <button type="button" aria-label="Media Player" className="ml-[14px] w-[20px] flex justify-center">
          <svg viewBox="0 0 24 24" className="size-[16px]"><path d="M4 2h18v20H4z" fill="#8fc3e6" stroke="#4f8fbd" /><circle cx="11" cy="12" r="9" fill="#ee7a1e" stroke="#fff" strokeWidth="1.500" /><path d="M8 7v10l8-5z" fill="#fff" /></svg>
        </button>
        <div className="flex gap-[2px] ml-[10px]">{Object.keys(APPS).map((n) => <AppButton key={n} n={n} />)}</div>
        <span className="flex-1" />
        <span className="text-[7px]">EN</span>
        <button type="button" aria-label="hidden icons" className="w-[12px] ml-[6px] flex justify-center"><svg viewBox="0 0 6 4" className="w-[5px] h-[3px]"><path d="M0 4h6L3 0z" fill="#fff" /></svg></button>
        <div className="flex gap-[3px] mx-[3px]">
          <svg viewBox="0 0 12 12" className="size-[11px]"><path d="M2 1v10" stroke="#fff" strokeWidth="1.300" /><path d="M3 1.500h6v5H3z" fill="#f4f6f8" stroke="#555" strokeWidth=".5" /><circle cx="8.500" cy="8.500" r="3.200" fill="#d8261c" /><path d="M7.200 7.200l2.600 2.600M9.800 7.200L7.200 9.800" stroke="#fff" /></svg>
          <svg viewBox="0 0 12 12" className="size-[11px]"><path d="M3 2h5v9H3z" fill="#dfe5ea" stroke="#3f4a56" strokeWidth=".8" /><path d="M4.500 1h2M7 4h3v3L8 9" fill="none" stroke="#fff" strokeWidth="1.300" /></svg>
          <svg viewBox="0 0 12 12" className="size-[11px]"><path d="M3 2.500h8v6H3z" fill="#6d7f92" stroke="#fff" /><path d="M5 10.500h5M1 1v5M1 3h2" stroke="#fff" strokeWidth="1.200" /></svg>
        </div>
        <div className="w-[46px] text-[7px] leading-[10px] text-center">14:46<br />24.05.2013</div>
        <button type="button" aria-label="Show desktop" className="w-[7px] h-full border border-[#5f7287] bg-gradient-to-r from-[#b9c8d8] to-[#7f92a8]" />
      </div>
    </div>
  );
}
